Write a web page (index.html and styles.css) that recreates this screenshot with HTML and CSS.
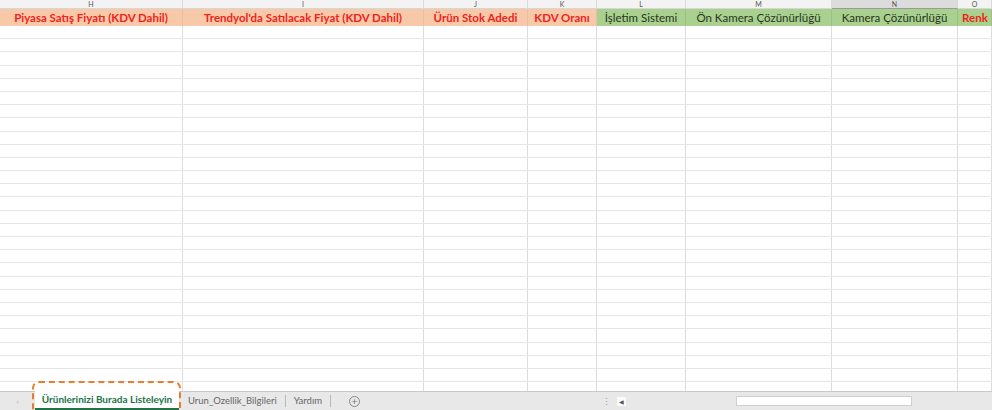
FILE: index.html
```html
<!DOCTYPE html>
<html lang="tr">
<head>
  <meta charset="UTF-8" />
  <title>Ürünlerinizi Burada Listeleyin</title>
  <link rel="stylesheet" href="styles.css">
</head>
<body>
  <div class="sheet">
    <div class="letters">
      <div>H</div><div>I</div><div>J</div><div>K</div><div>L</div><div>M</div><div class="picked">N</div><div>O</div>
    </div>
    <div class="heads">
      <div class="hd red">Piyasa Satış Fiyatı (KDV Dahil)</div>
      <div class="hd red">Trendyol'da Satılacak Fiyat (KDV Dahil)</div>
      <div class="hd red">Ürün Stok Adedi</div>
      <div class="hd red">KDV Oranı</div>
      <div class="hd green">İşletim Sistemi</div>
      <div class="hd green">Ön Kamera Çözünürlüğü</div>
      <div class="hd green">Kamera Çözünürlüğü</div>
      <div class="hd green tail">Renk</div>
    </div>
    <div class="rows" id="rows"></div>
  </div>

  <div class="tabs">
    <span class="nav">&#8249;</span>
    <div class="tab active">Ürünlerinizi Burada Listeleyin</div>
    <div class="tab">Urun_Ozellik_Bilgileri</div>
    <div class="tab">Yardım</div>
    <span class="add">+</span>
    <div class="spacer"></div>
    <span class="grip">&#8942;</span>
    <span class="arrow">&#9664;</span>
    <div class="track"></div>
  </div>

  <script>
    const rows = document.getElementById("rows");
    for (let r = 0; r < 28; r++) {
      const row = document.createElement("div");
      row.classList.add("row");
      for (let c = 0; c < 8; c++) {
        row.appendChild(document.createElement("div"));
      }
      rows.appendChild(row);
    }
  </script>
</body>
</html>
```

FILE: styles.css
```css
* {
  box-sizing: border-box;
}

body {
  margin: 0;
  width: 992px;
  height: 410px;
  overflow: hidden;
  background: #ffffff;
  font-family: Lato, "Noto Sans", sans-serif;
  display: flex;
  flex-direction: column;
}

.sheet {
  flex: 1;
  overflow: hidden;
}

.letters,
.heads,
.row {
  display: grid;
  grid-template-columns: 183px 241px 104px 69px 89px 146px 126px 34px;
}

.letters {
  height: 9px;
  background: #f3f3f3;
  border-bottom: 1px solid #d6d6d6;
}

.letters div {
  font-size: 7px;
  line-height: 8px;
  color: #555;
  text-align: center;
  border-right: 1px solid #dadada;
}

.letters .picked {
  background: #dcdcdc;
  border-bottom: 1px solid #9a9a9a;
}

.heads {
  height: 17px;
}

.hd {
  font-size: 11.5px;
  line-height: 17px;
  text-align: center;
  white-space: nowrap;
  overflow: hidden;
  border-right: 1px solid #e4c0a6;
}

.hd.red {
  background: #f8c9a9;
  color: #f0231c;
  font-weight: bold;
}

.hd.green {
  background: #a9d08e;
  color: #27361f;
  border-right-color: #9cc283;
}

.hd.tail {
  color: #f0231c;
  font-weight: bold;
  text-align: left;
  padding-left: 4px;
}

.row {
  height: 13.2px;
  border-bottom: 1px solid #e6e6e6;
}

.row div {
  border-right: 1px solid #dddddd;
}

.tabs {
  height: 19px;
  flex-shrink: 0;
  background: #e8e8e8;
  border-top: 1px solid #c9c9c9;
  display: flex;
  align-items: center;
  font-size: 9.5px;
  color: #666;
  white-space: nowrap;
}

.nav {
  width: 35px;
  text-align: center;
  color: #aaa;
  font-size: 8px;
}

.tab {
  padding: 0 8px;
  height: 12px;
  line-height: 12px;
  border-right: 1px solid #b8b8b8;
}

.tab.active {
  width: 144px;
  height: 19px;
  line-height: 17px;
  margin-top: -1px;
  padding: 0;
  text-align: center;
  background: #ffffff;
  color: #217346;
  font-size: 10px;
  font-weight: bold;
  border-right: none;
  border-bottom: 2px solid #217346;
  margin-right: 1px;
  position: relative;
}

.tab.active::before {
  content: "";
  position: absolute;
  left: -3px;
  right: -2px;
  top: -10px;
  height: 40px;
  border: 2px dashed #e87d2c;
  border-radius: 7px;
}

.add {
  margin-left: 18px;
  width: 11px;
  height: 11px;
  border: 1px solid #888;
  border-radius: 50%;
  font-size: 10px;
  line-height: 9px;
  text-align: center;
  color: #777;
}

.spacer {
  flex: 1;
}

.grip {
  color: #999;
  font-size: 9px;
  margin-right: 6px;
}

.arrow {
  font-size: 6px;
  color: #555;
  background: #fafafa;
  padding: 1px 2px;
  margin-right: 110px;
}

.track {
  width: 176px;
  height: 10px;
  background: #ffffff;
  border: 1px solid #cfcfcf;
  margin-right: 80px;
}
```
